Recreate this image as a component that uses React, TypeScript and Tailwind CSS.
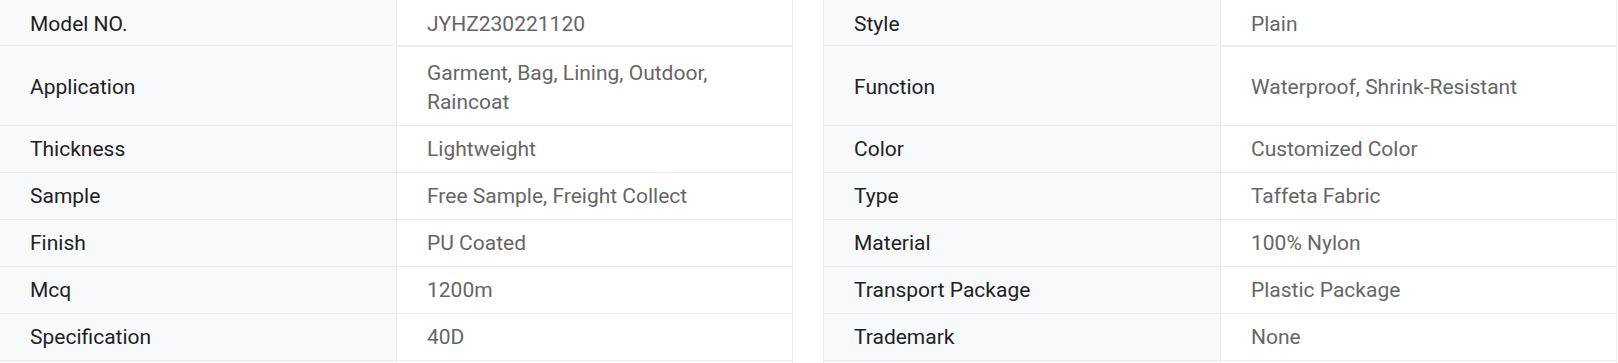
import React from 'react';

interface SpecRow {
  label: string;
  value: string;
  tall?: boolean;
}

const leftRows: SpecRow[] = [
  { label: 'Model NO.', value: 'JYHZ230221120' },
  { label: 'Application', value: 'Garment, Bag, Lining, Outdoor, Raincoat', tall: true },
  { label: 'Thickness', value: 'Lightweight' },
  { label: 'Sample', value: 'Free Sample, Freight Collect' },
  { label: 'Finish', value: 'PU Coated' },
  { label: 'Mcq', value: '1200m' },
  { label: 'Specification', value: '40D' },
  { label: 'Origin', value: 'China' },
];

const rightRows: SpecRow[] = [
  { label: 'Style', value: 'Plain' },
  { label: 'Function', value: 'Waterproof, Shrink-Resistant', tall: true },
  { label: 'Color', value: 'Customized Color' },
  { label: 'Type', value: 'Taffeta Fabric' },
  { label: 'Material', value: '100% Nylon' },
  { label: 'Transport Package', value: 'Plastic Package' },
  { label: 'Trademark', value: 'None' },
  { label: 'HS Code', value: '5407420000' },
];

const SpecTable: React.FC<{ rows: SpecRow[] }> = ({ rows }) => (
  <div className="w-[794px] shrink-0 border-x border-t border-[#e8ecf2]">
    {rows.map((row, i) => (
      <div
        key={row.label}
        className={`flex border-b border-[#e8ecf2] ${row.tall ? 'h-[80px]' : 'h-[47px]'}`}
      >
        <div
          className={`w-[397px] shrink-0 flex items-center bg-[#f8f9fb] border-r border-[#e8ecf2] pl-[30px] pr-4 text-[#222222] ${
            row.tall ? 'leading-[29px]' : 'leading-[31px]'
          } ${i < 2 ? 'pt-[4px]' : ''}`}
        >
          {row.label}
        </div>
        <div
          className={`flex-1 flex items-center pl-[30px] pr-6 text-[#666666] ${
            row.tall ? 'leading-[29px]' : 'leading-[31px]'
          } ${i < 2 ? 'pt-[4px]' : ''} ${i === 1 ? 'shadow-[inset_0_1px_0_#e8ecf2]' : ''}`}
        >
          {row.value}
        </div>
      </div>
    ))}
  </div>
);

export default function App() {
  return (
    <div className="w-[1618px] h-[363px] overflow-hidden bg-white">
      <div className="flex gap-[30px] -ml-px -mt-[2px] font-['Roboto',sans-serif] text-[21px]">
        <SpecTable rows={leftRows} />
        <SpecTable rows={rightRows} />
      </div>
    </div>
  );
}
